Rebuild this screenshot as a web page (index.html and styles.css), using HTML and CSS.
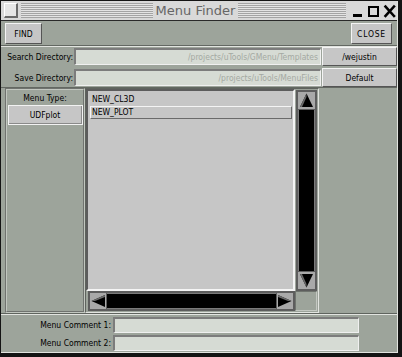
FILE: index.html
```html
<!DOCTYPE html>
<html>
<head>
<meta charset="utf-8">
<link rel="stylesheet" href="styles.css">
</head>
<body>
<div class="win">
  <div class="inner">
    <div class="titlebar">
      <span class="menubox"></span>
      <div class="stripes"><span class="title">Menu Finder</span></div>
      <svg class="wm" width="51" height="19" viewBox="0 0 51 19">
        <rect x="7" y="13" width="9" height="3" fill="#000"/>
        <rect x="23" y="6" width="9" height="9" fill="none" stroke="#000" stroke-width="2"/>
        <path d="M39.5 5.5 L48 15 M48 5.5 L39.5 15" stroke="#000" stroke-width="2.6" stroke-linecap="square" fill="none"/>
      </svg>
    </div>

    <div class="toolbar">
      <button class="btn find">FIND</button>
      <button class="btn close">CLOSE</button>
    </div>

    <div class="dirs">
      <div class="row">
        <span class="lbl">Search Directory:</span>
        <div class="field">/projects/uTools/GMenu/Templates</div>
        <button class="btn dirbtn">/wejustin</button>
      </div>
      <div class="row">
        <span class="lbl">Save Directory:</span>
        <div class="field">/projects/uTools/MenuFiles</div>
        <button class="btn dirbtn">Default</button>
      </div>
    </div>

    <div class="middle">
      <div class="typepanel">
        <div class="typelbl">Menu Type:</div>
        <button class="btn udf">UDFplot</button>
      </div>
      <div class="listframe">
        <div class="list">
          <div class="item">NEW_CL3D</div>
          <div class="item sel">NEW_PLOT</div>
        </div>
        <div class="vscroll">
          <svg class="arrow" width="17" height="17" viewBox="0 0 17 17"><rect width="17" height="17" fill="#a9a9a9"/><polygon points="8.5,1.5 15,15 2,15" fill="#000"/><polygon points="8.5,1.5 2,15 4,15 8.5,5" fill="#6a6a6a"/></svg>
          <div class="trough"></div>
          <svg class="arrow" width="17" height="17" viewBox="0 0 17 17"><rect width="17" height="17" fill="#a9a9a9"/><polygon points="2,2 15,2 8.5,15.5" fill="#000"/><polygon points="2,2 4,2 8.5,12 8.5,15.5" fill="#6a6a6a"/></svg>
        </div>
        <div class="hscroll">
          <svg class="harrow" width="16" height="16" viewBox="0 0 16 16"><rect width="16" height="16" fill="#a9a9a9"/><polygon points="1.5,8 15,2 15,14" fill="#000"/><polygon points="1.5,8 15,2 15,4 5,8" fill="#6a6a6a"/></svg>
          <div class="htrough"></div>
          <svg class="harrow" width="16" height="16" viewBox="0 0 16 16"><rect width="16" height="16" fill="#a9a9a9"/><polygon points="1,2 14.5,8 1,14" fill="#000"/><polygon points="1,2 14.5,8 11,8 1,4" fill="#6a6a6a"/></svg>
        </div>
        <div class="corner"></div>
      </div>
      <div class="filler"></div>
    </div>

    <div class="comments">
      <div class="crow">
        <span class="clbl">Menu Comment 1:</span>
        <div class="cfield"></div>
      </div>
      <div class="crow">
        <span class="clbl">Menu Comment 2:</span>
        <div class="cfield"></div>
      </div>
    </div>
  </div>
</div>
</body>
</html>
```

FILE: styles.css
```css
* { box-sizing: border-box; margin: 0; padding: 0; }

html, body {
  width: 402px;
  height: 357px;
  overflow: hidden;
  background: #000;
}

body {
  font-family: "DejaVu Sans Condensed", "Liberation Sans", sans-serif;
  font-size: 8.5px;
  color: #000;
}

.win {
  width: 402px;
  height: 357px;
  border-style: solid;
  border-color: #141414;
  border-width: 1px 4px 4px 1px;
}

.inner {
  height: 100%;
  background: #9da49b;
  border-right: 1px solid #e2e4e0;
  border-bottom: 1px solid #e2e4e0;
  display: flex;
  flex-direction: column;
}

/* title bar */
.titlebar {
  height: 20px;
  flex: none;
  display: flex;
  align-items: flex-start;
  background: #d9d9d9;
  border-bottom: 1px solid #2a2a2a;
}

.menubox {
  width: 14px;
  height: 15px;
  margin: 2px 0 0 3px;
  background: #e6e6e6;
  border-style: solid;
  border-width: 1px 2px 2px 1px;
  border-color: #ffffff #6a6a6a #6a6a6a #ffffff;
  flex: none;
}

.stripes {
  width: 325px;
  height: 15px;
  margin: 2px 0 0 3px;
  flex: none;
  display: flex;
  justify-content: center;
  background: repeating-linear-gradient(to bottom, #a4a4a4 0 1px, #e4e4e4 1px 2px);
}

.title {
  margin-left: 24px;
  padding: 0 3px;
  background: #d9d9d9;
  font-family: "DejaVu Sans", sans-serif;
  font-size: 13px;
  line-height: 15px;
  color: #666;
  white-space: nowrap;
}

.wm { flex: none; display: block; }

/* buttons */
.btn {
  font: inherit;
  color: #000;
  background: #c6c6c6;
  border-style: solid;
  border-width: 1px;
  border-color: #f4f4f4 #555 #555 #f4f4f4;
  display: flex;
  align-items: center;
  justify-content: center;
  white-space: nowrap;
}

/* toolbar */
.toolbar {
  height: 25px;
  flex: none;
  display: flex;
  justify-content: space-between;
  align-items: flex-start;
  padding: 2px 5px 0 4px;
  border-bottom: 1px solid #636862;
}

.find { width: 37px; height: 21px; }
.close { width: 41px; height: 21px; letter-spacing: 0.8px; }

/* directories */
.dirs {
  height: 42px;
  flex: none;
  display: flex;
  flex-direction: column;
  gap: 2px;
  border-top: 1px solid #e2e4e0;
  border-bottom: 1px solid #636862;
}

.row {
  height: 19px;
  display: flex;
  align-items: center;
}

.lbl {
  width: 73px;
  flex: none;
  text-align: right;
  padding-right: 1px;
  white-space: nowrap;
}

.field {
  width: 247px;
  height: 17px;
  flex: none;
  background: #d6dbd4;
  border-style: solid;
  border-width: 2px 1px 1px 2px;
  border-color: #7c7c7c #f0f0f0 #f0f0f0 #7c7c7c;
  color: #a4a9a2;
  text-align: right;
  padding-right: 2px;
  line-height: 14px;
  overflow: hidden;
  white-space: nowrap;
}

.dirbtn {
  width: 75px;
  height: 19px;
  margin-left: 1px;
  flex: none;
}

/* middle */
.middle {
  height: 226px;
  flex: none;
  display: flex;
  border-bottom: 1px solid #5f645e;
}

.typepanel {
  width: 80px;
  margin-left: 4px;
  flex: none;
  border: 2px groove #c2c7c0;
  display: flex;
  flex-direction: column;
  align-items: center;
}

.typelbl {
  margin-top: 2px;
  line-height: 12px;
}

.udf {
  width: 75px;
  height: 20px;
  margin-top: 1px;
  border: 1px solid #f2f2f2;
  box-shadow: inset -1px -1px 0 #8a8a8a;
}

.listframe {
  width: 234px;
  flex: none;
  border-style: solid;
  border-width: 1px;
  border-color: #5f645e #e2e4e0 #e2e4e0 #5f645e;
  display: grid;
  grid-template-columns: 209px 23px;
  grid-template-rows: 202px 20px 1fr;
}

.list {
  background: #c6c6c6;
  border-style: solid;
  border-width: 2px;
  border-color: #5c5c5c #f4f4f4 #f4f4f4 #5c5c5c;
  padding-top: 2px;
}

.item {
  height: 13px;
  margin: 0 1px 0 2px;
  padding-left: 1px;
  line-height: 11px;
  border: 1px solid transparent;
  color: #000;
}

.item.sel {
  border-color: #f4f4f4 #6a6a6a #6a6a6a #f4f4f4;
}

.vscroll {
  margin: 1px 1px 0 1px;
  background: #5d5d5d;
  padding: 2px;
  display: flex;
  flex-direction: column;
  gap: 1px;
}

.arrow, .harrow { display: block; flex: none; }

.trough {
  flex: 1;
  background: #000;
  border-left: 1px solid #7a7a7a;
  border-right: 1px solid #7a7a7a;
}

.hscroll {
  margin-left: 2px;
  background: #5d5d5d;
  padding: 2px;
  display: flex;
  gap: 1px;
}

.htrough {
  flex: 1;
  background: #000;
  border-top: 1px solid #7a7a7a;
  border-bottom: 1px solid #7a7a7a;
}

.corner {
  margin-right: 1px;
  border-style: solid;
  border-width: 1px;
  border-color: #6f746e #c4c8c2 #c4c8c2 #6f746e;
}

.filler { flex: 1; }

/* comments */
.comments {
  flex: 1;
  border-top: 1px solid #e2e4e0;
  padding-top: 2px;
  display: flex;
  flex-direction: column;
  gap: 2px;
}

.crow {
  height: 16px;
  display: flex;
  align-items: center;
}

.clbl {
  width: 112px;
  flex: none;
  text-align: right;
  padding-right: 2px;
  white-space: nowrap;
}

.cfield {
  width: 246px;
  height: 16px;
  flex: none;
  background: #d6dbd4;
  border-style: solid;
  border-width: 2px 1px 1px 2px;
  border-color: #7c7c7c #f0f0f0 #f0f0f0 #7c7c7c;
}
```
